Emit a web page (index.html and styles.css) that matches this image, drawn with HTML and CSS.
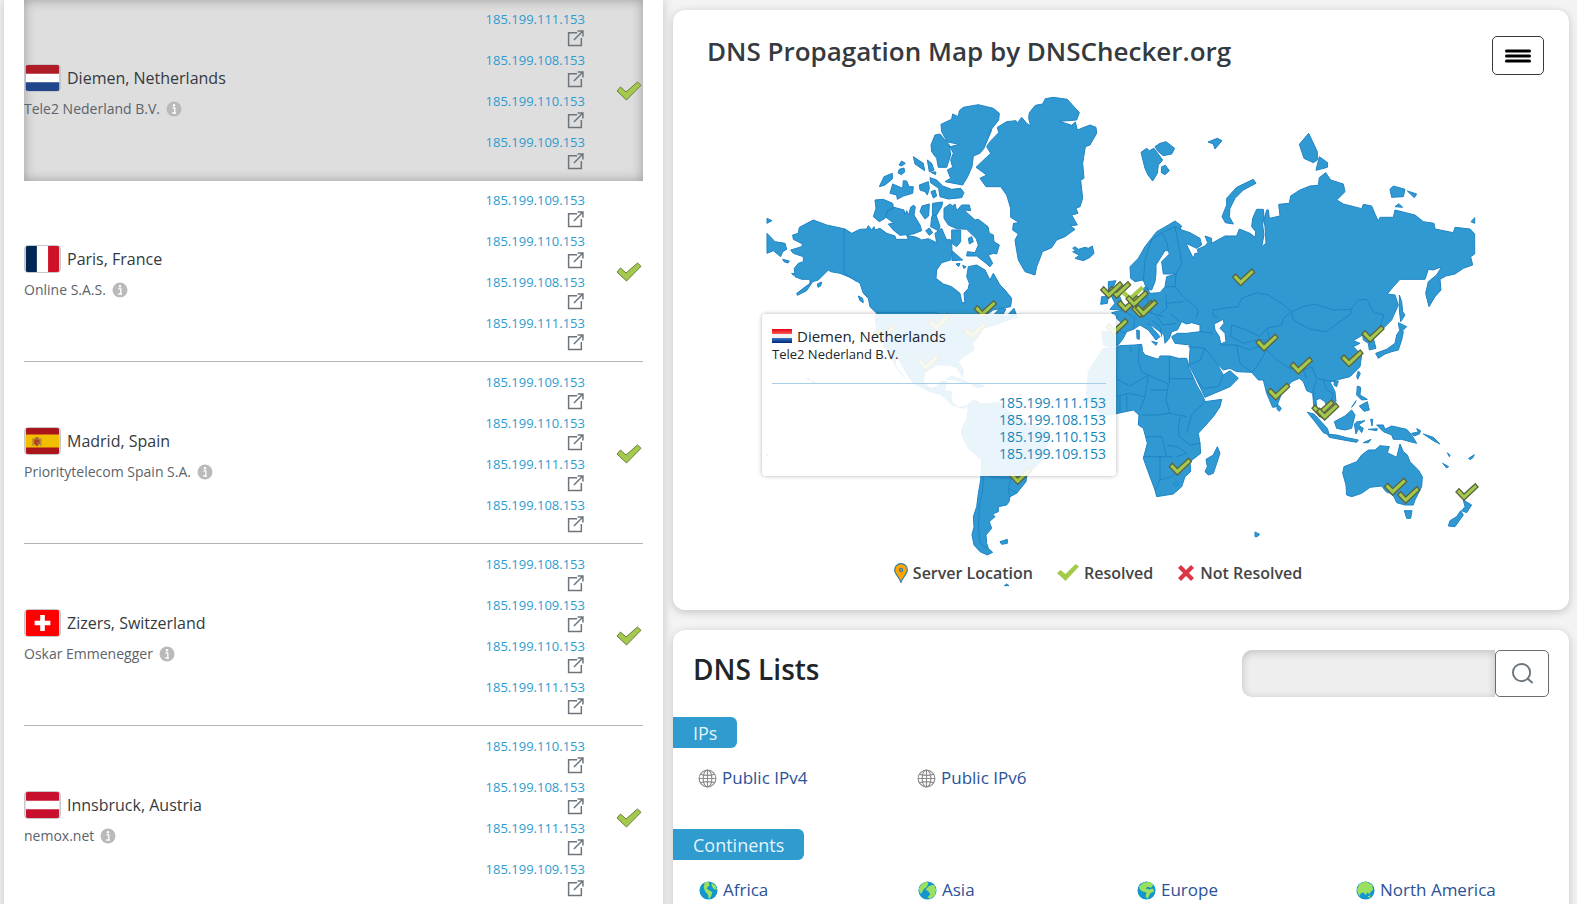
FILE: index.html
```html
<!DOCTYPE html>
<html lang="en">
<head>
<meta charset="utf-8">
<title>DNS Propagation Checker</title>
<link rel="stylesheet" href="styles.css">
</head>
<body>
<svg class="defs" aria-hidden="true">
  <symbol id="ext" viewBox="0 0 16 16"><path d="M9.500 2.500H1.500v12h12V7.500M6.500 9.500 14.500 1.500M10 1h5v5" fill="none" stroke="#6c757d" stroke-width="1.400"/></symbol>
  <symbol id="info" viewBox="0 0 16 16"><circle cx="8" cy="8" r="7.500" fill="#bababa"/><circle cx="8" cy="4.300" r="1.200" fill="#fff"/><path d="M6.300 6.800h2.500v4.800M6.200 12h3.800" fill="none" stroke="#fff" stroke-width="1.300"/></symbol>
  <symbol id="tick" viewBox="0 0 26 20"><path d="m1 10 3.500-4L10 11 21.500 1 25 4.300 10.500 19z" fill="#a4ca4c" stroke="#6d7a45" stroke-width="1" stroke-linejoin="round"/></symbol>
  <symbol id="tick-flat" viewBox="0 0 22 18"><path d="m0 9 3.500-3L8.500 10 18.500 0 22 2.500 8.500 17z" fill="#a4ca4c"/></symbol>
  <symbol id="globe" viewBox="0 0 20 20"><g fill="none" stroke="#8b8b8b" stroke-width="1.200"><circle cx="10" cy="10" r="8.800"/><ellipse cx="10" cy="10" rx="4.600" ry="8.800"/><path d="M10 1v18M1 10h18M2.500 5.500Q10 8 17.500 5.500M2.500 14.500Q10 12 17.500 14.500"/></g></symbol>
  <path id="pin" d="M0 0-24-25-15-35 0-19 34-50 42-40z"/>
</svg>
<div class="page">
  <main class="servers">
    <section class="row active">
      <div class="place">
        <div class="city"><svg class="flag" viewBox="0 0 36 28"><path fill="#ae1c28" d="M0 0h36v28H0z"/><path fill="#fff" d="M0 9.300h36v18.700H0z"/><path fill="#21468b" d="M0 18.700h36V28H0z"/></svg>Diemen, Netherlands</div>
        <div class="isp">Tele2 Nederland B.V. <svg class="info"><use href="#info"/></svg></div>
      </div>
      <ul class="ips">
        <li><a href="#">185.199.111.153</a><svg><use href="#ext"/></svg></li>
        <li><a href="#">185.199.108.153</a><svg><use href="#ext"/></svg></li>
        <li><a href="#">185.199.110.153</a><svg><use href="#ext"/></svg></li>
        <li><a href="#">185.199.109.153</a><svg><use href="#ext"/></svg></li>
      </ul>
      <svg class="tick"><use href="#tick"/></svg>
    </section>
    <section class="row">
      <div class="place">
        <div class="city"><svg class="flag" viewBox="0 0 36 28"><path fill="#002654" d="M0 0h12v28H0z"/><path fill="#fff" d="M12 0h12v28H12z"/><path fill="#ce1126" d="M24 0h12v28H24z"/></svg>Paris, France</div>
        <div class="isp">Online S.A.S. <svg class="info"><use href="#info"/></svg></div>
      </div>
      <ul class="ips">
        <li><a href="#">185.199.109.153</a><svg><use href="#ext"/></svg></li>
        <li><a href="#">185.199.110.153</a><svg><use href="#ext"/></svg></li>
        <li><a href="#">185.199.108.153</a><svg><use href="#ext"/></svg></li>
        <li><a href="#">185.199.111.153</a><svg><use href="#ext"/></svg></li>
      </ul>
      <svg class="tick"><use href="#tick"/></svg>
    </section>
    <section class="row">
      <div class="place">
        <div class="city"><svg class="flag" viewBox="0 0 36 28"><path fill="#aa151b" d="M0 0h36v28H0z"/><path fill="#f1bf00" d="M0 7h36v14H0z"/><path d="M7 11h2v8H7zM15 11h2v8h-2z" fill="#b98a3a"/><path d="M9 12h6v5l-3 3-3-3z" fill="#ad3f1d"/><path d="M10 10h4v2h-4zM12 15h2v3h-2z" fill="#9a6b50"/></svg>Madrid, Spain</div>
        <div class="isp">Prioritytelecom Spain S.A. <svg class="info"><use href="#info"/></svg></div>
      </div>
      <ul class="ips">
        <li><a href="#">185.199.109.153</a><svg><use href="#ext"/></svg></li>
        <li><a href="#">185.199.110.153</a><svg><use href="#ext"/></svg></li>
        <li><a href="#">185.199.111.153</a><svg><use href="#ext"/></svg></li>
        <li><a href="#">185.199.108.153</a><svg><use href="#ext"/></svg></li>
      </ul>
      <svg class="tick"><use href="#tick"/></svg>
    </section>
    <section class="row">
      <div class="place">
        <div class="city"><svg class="flag" viewBox="0 0 36 28"><path fill="#f00" d="M0 0h36v28H0z"/><path fill="#fff" d="M15.500 5.500h5v6H26.500v5H20.500v6h-5v-6H9.500v-5h6z"/></svg>Zizers, Switzerland</div>
        <div class="isp">Oskar Emmenegger <svg class="info"><use href="#info"/></svg></div>
      </div>
      <ul class="ips">
        <li><a href="#">185.199.108.153</a><svg><use href="#ext"/></svg></li>
        <li><a href="#">185.199.109.153</a><svg><use href="#ext"/></svg></li>
        <li><a href="#">185.199.110.153</a><svg><use href="#ext"/></svg></li>
        <li><a href="#">185.199.111.153</a><svg><use href="#ext"/></svg></li>
      </ul>
      <svg class="tick"><use href="#tick"/></svg>
    </section>
    <section class="row">
      <div class="place">
        <div class="city"><svg class="flag" viewBox="0 0 36 28"><path fill="#c8102e" d="M0 0h36v28H0z"/><path fill="#fff" d="M0 9.300h36v9.400H0z"/></svg>Innsbruck, Austria</div>
        <div class="isp">nemox.net <svg class="info"><use href="#info"/></svg></div>
      </div>
      <ul class="ips">
        <li><a href="#">185.199.110.153</a><svg><use href="#ext"/></svg></li>
        <li><a href="#">185.199.108.153</a><svg><use href="#ext"/></svg></li>
        <li><a href="#">185.199.111.153</a><svg><use href="#ext"/></svg></li>
        <li><a href="#">185.199.109.153</a><svg><use href="#ext"/></svg></li>
      </ul>
      <svg class="tick"><use href="#tick"/></svg>
    </section>
  </main>

  <div class="side">
    <section class="card map-card">
      <header class="map-head">
        <h2>DNS Propagation Map by DNSChecker.org</h2>
        <button class="menu" aria-label="Menu"><svg viewBox="0 0 26 14"><path d="M1.500 2h23M1.500 7h23M1.500 12h23" stroke="#000" stroke-width="3" stroke-linecap="round"/></svg></button>
      </header>
      <div class="map">
        <svg class="world" viewBox="761 90 720 470" role="img" aria-label="World map of DNS servers">
          <g class="land" transform="translate(760 80) scale(.33333)">
            <path d="M648,262 692,220 680,200 690,185 716,158 712,142 740,125 768,122 772,130 785,112 800,130 812,138 806,115 808,98 826,76 848,72 856,56 880,52 922,58 958,98 950,120 898,124 935,136 946,126 952,150 990,135 1008,142 1010,160 990,195 976,200 968,250 972,295 962,300 968,355 960,380 948,385 954,400 935,405 952,435 930,437 945,448 915,470 890,480 875,503 847,515 840,535 830,560 825,585 795,575 775,540 768,500 765,480 775,462 758,450 760,430 778,428 752,412 752,385 740,345 722,320 678,320 660,295 680,285Z"/>
            <path d="M595,110 598,92 610,82 655,74 700,85 718,100 716,120 685,160 695,150 672,205 660,220 640,228 636,260 622,292 608,315 555,305 572,295 562,270 578,262 572,240 580,220 570,200 598,193 562,186 545,155 543,133 575,118 578,102Z"/>
            <path d="M540,162 555,180 568,195 572,225 560,262 535,262 530,235 515,215 513,195 525,165ZM460,230 490,250 494,272 465,252ZM502,240 515,250 522,270 508,275ZM512,276 528,276 526,284ZM425,243 436,250 425,258 417,255ZM418,268 432,264 434,276 424,284 414,278ZM358,320 372,290 397,280 397,297 375,315ZM398,312 428,325 430,302 440,303 447,320 460,320 458,340 430,348 412,358 410,345 390,340ZM478,315 505,305 508,325 502,345 495,335 480,330ZM513,335 525,330 530,348 520,354ZM510,293 530,300 548,318 575,328 602,325 612,338 605,353 565,357 540,350 536,325 512,308Z"/>
            <path d="M345,360 370,358 398,370 400,382 380,395 375,415 358,425 340,410 348,385ZM382,395 402,382 432,390 435,405 440,392 446,405 452,382 460,376 466,380 462,405 480,435 485,452 460,462 420,466 400,450 385,432 402,430 378,412ZM486,378 508,372 506,408 495,417 480,395ZM518,370 548,366 545,380 530,405 517,408ZM515,410 528,405 540,440 535,452 512,440Z"/>
            <path d="M552,385 570,372 578,378 585,372 590,392 605,375 628,375 632,392 612,390 645,420 655,418 684,440 688,460 700,465 702,485 718,495 710,522 700,520 685,525 698,550 690,560 672,545 650,528 620,528 622,515 645,518 655,495 648,475 620,448 590,446 565,435 552,415ZM625,475 635,470 640,485 628,492ZM575,450 602,450 602,485 590,500 575,490ZM576,512 608,540 576,542ZM497,452 508,444 518,458 508,466ZM588,552 600,550 596,560ZM608,556 618,560 612,566Z"/>
            <path d="M118,442 160,420 200,435 255,447 275,460 300,448 320,447 325,437 335,450 342,440 345,450 360,445 380,460 405,468 408,478 445,478 440,466 470,472 485,480 505,476 530,488 525,460 545,445 560,480 570,478 576,500 575,520 572,540 545,548 530,570 528,595 550,612 575,620 600,640 605,665 615,670 612,640 625,625 628,610 620,590 625,560 650,555 675,570 690,600 700,580 720,615 735,630 755,655 752,680 700,690 672,710 700,705 720,685 738,687 725,710 740,708 762,685 772,712 740,722 705,735 670,745 650,778 638,790 642,810 610,830 595,845 610,870 608,892 592,865 570,855 530,855 515,865 495,875 490,905 510,925 530,922 540,905 562,905 552,932 575,935 575,965 595,982 620,978 610,985 575,975 545,945 510,935 460,910 440,880 410,830 405,855 435,895 415,870 390,825 360,780 350,750 345,710 350,700 330,680 325,655 310,640 300,610 285,600 265,590 240,580 212,575 205,570 185,590 175,600 158,605 140,632 112,646 110,640 150,610 150,598 125,598 105,590 103,565 115,550 130,545 130,530 100,520 92,510 125,500 128,492 100,478 98,465 115,460Z"/>
            <path d="M21,460 45,485 75,490 80,508 68,515 62,530 40,512 21,520ZM21,415 36,422 21,430ZM68,538 88,543 84,549 72,545ZM295,648 308,655 310,668 300,662ZM172,612 185,606 182,618 174,622ZM95,580 106,582 100,586Z"/>
            <path d="M938,515 948,514 938,505 945,500 955,508 975,502 985,505 997,498 1002,520 990,532 970,542 945,535 958,526Z"/>
            <path class="border" d="M252,447V578L290,605M350,697H525L560,712M380,395 402,382"/>
          </g>
          <g class="land" transform="translate(750 300) scale(.33333)">
            <path d="M650,318 670,300 685,305 690,312 750,308 765,325 800,350 835,368 865,380 890,388 900,410 885,450 878,480 850,505 830,530 828,545 800,580 780,590 777,605 770,615 745,620 745,635 728,642 735,650 718,665 725,685 708,705 710,730 715,745 728,757 712,765 690,755 672,735 666,705 672,680 670,650 680,620 685,580 692,540 695,480 655,445 635,405 635,385 650,360 655,330Z"/>
            <path d="M588,238 605,228 640,240 660,250 640,250 615,240ZM665,255 680,250 705,260 680,263ZM170,235 180,237 175,240ZM185,242 200,250 193,253ZM750,725 772,718 772,730 755,733ZM763,857 770,852 777,857ZM50,464h4v3h-4z"/>
            <path class="border" d="M700,530 698,570 688,620 685,680 690,730 712,745M783,535 775,565 800,578M780,590 775,565M700,330 715,360 760,350M655,380 690,390 710,430 760,450 790,500M695,480 720,530 783,535"/>
          </g>
          <g class="land" transform="translate(1090 300) scale(.33333)">
            <path d="M40,145 70,145 90,137 135,135 155,133 158,155 165,165 205,178 210,168 240,168 265,175 290,175 298,205 320,255 340,290 345,305 395,298 390,320 370,350 325,400 330,430 332,460 300,485 302,515 285,530 275,560 250,582 200,590 195,570 178,525 160,475 172,430 160,385 145,375 147,345 130,330 60,345 30,343 -5,305 -10,280 -5,215 20,175Z"/>
            <path d="M348,478 370,465 382,440 390,460 370,520 355,525 345,515 352,500ZM562,312 574,325 568,334 561,328ZM733,243 745,243 740,260 732,255ZM805,213 811,220 803,238 800,228ZM802,258 812,262 810,285 832,298 815,300 800,285ZM808,318 832,305 838,330 822,334ZM798,302 785,322 796,308Z"/>
            <path d="M652,337 672,342 712,385 718,405 700,398 675,365ZM712,403 740,405 770,413 805,420 800,427 760,420 718,412ZM820,428 843,418 835,428ZM733,365 765,348 785,330 795,345 785,385 765,390 740,385ZM793,372 800,366 825,362 805,375 820,385 815,398 806,385 798,402ZM842,358 848,358 846,378ZM835,388 862,386 860,392ZM860,375 880,375 885,388 905,378 950,388 965,405 980,430 960,425 935,418 910,418 905,405 880,395ZM965,400 985,396 980,386 992,392 988,402 972,408ZM1000,402 1030,412 1050,432 1030,422ZM1072,458 1080,466 1078,470ZM1058,490 1076,500 1070,504ZM1136,475 1153,464 1148,474 1140,479Z"/>
            <path d="M762,500 800,485 815,465 835,450 855,450 870,437 898,440 892,458 920,472 930,432 940,455 952,465 960,485 985,510 997,530 995,560 975,600 970,615 945,615 920,608 912,590 900,580 888,575 875,558 840,562 815,580 785,590 770,585 768,555 758,520ZM943,632 966,632 962,655 950,655ZM1120,600 1145,615 1130,638 1115,632 1125,620ZM1112,632 1120,645 1095,680 1075,678 1080,662 1100,650ZM495,696 509,703 502,710 495,710Z"/>
            <path d="M940,95 935,120 925,150 905,155 885,162 865,175 857,160 890,148 915,130 920,105 930,90ZM928,88 925,68 950,80 938,92Z"/>
            <path class="border" d="M80,237 120,258 175,225M148,137 145,185 155,215 175,225 235,252M238,170V250M238,236H312M175,225 165,290 150,330M235,252 228,300 240,340 290,350M155,345H200L240,340M165,410H215L220,430 230,470M160,470H250M210,470V540L245,530 290,485M270,350 265,380 268,410 300,435 332,430M345,305 305,345 290,400M80,290 115,280 165,290M180,270H230M195,572 210,540M250,552 258,543 266,552 258,560ZM230,435 262,440 290,460 260,470M90,290V335M110,285V330M75,143 78,235M120,140 125,155"/>
          </g>
          <g class="land" transform="translate(1080 110) scale(.33333)">
            <path d="M150,470 175,445 195,410 230,365 265,345 285,333 305,348 300,358 330,368 360,385 365,405 350,415 318,400 325,415 335,435 340,445 345,430 355,430 352,418 375,408 383,398 375,378 395,385 395,400 435,378 470,378 478,357 510,370 526,382 527,365 515,350 518,325 530,298 550,298 552,320 548,345 552,375 545,410 558,400 555,350 552,330 560,300 565,300 568,325 600,318 596,283 628,280 632,258 660,240 690,228 715,226 718,203 737,188 752,210 790,222 795,245 770,270 790,282 845,296 850,283 875,288 885,312 895,333 900,322 940,322 945,300 1005,315 1030,335 1062,340 1065,357 1120,368 1125,352 1170,357 1184,372 1184,432 1172,440 1178,465 1150,475 1125,492 1098,498 1080,508 1083,540 1065,560 1047,590 1037,550 1045,515 1070,495 1085,470 1060,480 1045,478 1035,508 960,508 940,530 922,552 945,555 955,585 935,630 910,655 880,685 888,715 868,720 865,700 850,690 848,675 820,692 840,700 820,710 845,735 840,770 810,800 770,810 750,815 765,845 768,875 742,895 735,875 720,865 708,870 710,890 725,920 735,930 720,920 702,895 698,850 680,842 670,815 658,805 635,815 605,850 590,890 578,892 560,850 550,810 535,810 515,787 470,785 450,775 430,780 410,760 430,795 450,782 475,805 450,830 375,862 350,810 327,765 330,720 330,705 285,700 275,680 292,670 320,670 360,665 360,645 335,638 320,642 305,635 292,660 275,665 268,685 255,700 252,675 220,650 205,640 240,680 228,690 205,660 180,645 160,658 140,665 130,685 115,705 90,712 70,705 65,665 120,665 125,640 105,620 95,608 130,600 160,585 175,560 195,555 190,535 200,530 210,550 240,548 255,530 260,500 290,492 250,492 245,455 268,432 265,422 255,422 228,465 228,490 225,515 215,540 200,538 190,510 165,515 152,505Z"/>
            <path d="M183,127 200,115 208,122 222,115 248,150 235,165 232,190 218,213 204,195 195,175ZM225,110 240,100 258,95 284,115 275,132 250,137 235,125ZM245,170 256,166 268,182 255,194 244,188ZM384,96 412,85 426,92 405,117 400,102ZM426,320 440,285 440,265 470,232 520,208 528,220 490,240 465,265 450,295 448,320 460,342 436,338ZM686,70 712,125 712,150 700,158 672,145 658,103ZM718,140 743,158 742,172 708,181ZM930,238 940,228 975,238 970,260 935,262ZM982,243 1010,252 1003,263ZM945,290 957,281 968,292ZM1173,335 1184,323 1184,340Z"/>
            <path d="M85,515 108,512 100,530 115,550 130,585 125,600 90,598 105,580 95,560 85,540ZM65,560 85,560 82,580 62,583ZM958,555 965,575 968,605 975,615 962,635 958,600ZM170,660 178,662 178,688 171,686ZM215,694 232,698 228,706Z"/>
            <path class="border" d="M190,515 195,450 215,390 245,368 262,400 265,420M245,368 285,350 292,385 300,425 305,460 288,492M285,350 300,358M288,492 285,530 310,560 355,600 350,625M255,530H285M258,555 260,595M310,575 260,580M200,560 215,610 250,620M180,600 215,610M400,600 430,595 475,590 485,565 530,548 565,555 605,580 635,605 610,625 605,645 560,655 540,680 500,660 455,645 452,680M400,600 398,615 415,625M635,605 670,590 705,582 760,600 812,598 815,610 780,635 740,665 690,658 640,630ZM812,598 835,570 860,568 880,605 912,615 900,650M260,595 230,620 250,645 290,640M215,630 240,650 245,680M130,600 165,625 160,658M270,610 300,635M120,665 135,668M420,705 470,705 510,720 530,710M470,705 480,760 515,787M560,655 570,690 530,710 560,720 530,770 515,787M560,720 590,750 630,775 670,780 680,805M670,780 695,770 710,805 730,810 765,815M710,810 700,840 702,870M730,810 740,840 760,850 755,870M325,710 375,715 410,760M350,810 370,835 415,830 430,795M360,665 400,670M375,715 360,750 327,765M452,680 490,700 530,690 575,690"/>
            <path class="sea" d="M402,642 430,628 432,640 420,655 435,670 438,695 422,702 418,680 405,660Z"/>
          </g>
          <g class="pins" transform="translate(1080 110) scale(.33333)">
            <use href="#pin" x="482" y="527"/><use href="#pin" x="110" y="565"/><use href="#pin" x="86" y="565"/><use class="plain" href="#pin" x="150" y="577"/><use href="#pin" x="136" y="607"/><use href="#pin" x="162" y="592"/><use href="#pin" x="180" y="622"/><use href="#pin" x="190" y="620"/><use href="#pin" x="870" y="697"/>
            <use href="#pin" x="552" y="723"/><use href="#pin" x="655" y="792"/><use href="#pin" x="807" y="770"/><use href="#pin" x="587" y="870"/><use href="#pin" x="720" y="920"/><use href="#pin" x="734" y="930"/><use href="#pin" x="292" y="1095"/><use href="#pin" x="938" y="1155"/><use href="#pin" x="977" y="1180"/><use href="#pin" x="1152" y="1171"/><use href="#pin" x="102" y="676"/>
          </g>
          <g class="pins" transform="translate(750 300) scale(.33333)">
            <use href="#pin" x="697" y="52"/><use href="#pin" x="558" y="92"/><use href="#pin" x="527" y="212"/><use href="#pin" x="665" y="118"/><use href="#pin" x="803" y="553"/><use href="#pin" x="395" y="124"/>
          </g>
        </svg>
        <aside class="tip">
          <div class="tip-city"><svg viewBox="0 0 20 14"><defs><linearGradient id="r" x2="0" y2="1"><stop stop-color="#e1000f"/><stop offset="1" stop-color="#ff5a5a"/></linearGradient><linearGradient id="b" x2="0" y2="1"><stop stop-color="#3b78c4"/><stop offset="1" stop-color="#00247d"/></linearGradient></defs><path fill="#f4f4f4" d="M0 0h20v14H0z"/><path fill="url(#r)" d="M0 0h20v5H0z"/><path fill="url(#b)" d="M0 9h20v5H0z"/></svg>Diemen, Netherlands</div>
          <div class="tip-isp">Tele2 Nederland B.V.</div>
          <hr>
          <div class="tip-ips">185.199.111.153<br>185.199.108.153<br>185.199.110.153<br>185.199.109.153</div>
        </aside>
      </div>
      <div class="legend">
        <span><svg class="loc" viewBox="0 0 14 20"><path d="M7 19.300C5.500 14.500.7 11 .7 6.900a6.300 6.300 0 0 1 12.600 0C13.300 11 8.500 14.500 7 19.300z" fill="#ffa500" stroke="#2f7fa8" stroke-width="1.200"/><circle cx="7" cy="7" r="1.600" fill="#c9a24a" stroke="#2f7fa8" stroke-width="1.200"/></svg>Server Location</span>
        <span><svg class="ok"><use href="#tick-flat"/></svg>Resolved</span>
        <span><svg class="no" viewBox="0 0 18 18"><path d="M2.500 2.500l13 13M15.500 2.500l-13 13" stroke="#dc3545" stroke-width="4.200"/></svg>Not Resolved</span>
      </div>
    </section>

    <section class="card lists">
      <header class="lists-head">
        <h2>DNS Lists</h2>
        <form class="search">
          <input type="search" aria-label="Search DNS lists">
          <button type="button" aria-label="Search"><svg viewBox="0 0 24 24" fill="none" stroke="#6c757d" stroke-width="2"><circle cx="11" cy="11" r="9"/><path d="M17 17l5.500 5"/></svg></button>
        </form>
      </header>
      <h3>IPs</h3>
      <nav class="links">
        <a href="#"><svg><use href="#globe"/></svg>Public IPv4</a>
        <a href="#"><svg><use href="#globe"/></svg>Public IPv6</a>
      </nav>
      <h3>Continents</h3>
      <nav class="links continents">
        <a href="#"><svg viewBox="0 0 20 20"><circle cx="10" cy="10" r="9.500" fill="#1296cb"/><path d="M6 1.500 10 .5l1 4-3 3 2 2 4 2-1 4-2.500 4-1-5-3-3.500L5 7zM13 2l4 2.500 2 5-3.500-1-2-3z" fill="#9be05f"/></svg>Africa</a>
        <a href="#"><svg viewBox="0 0 20 20"><circle cx="10" cy="10" r="9.500" fill="#1296cb"/><path d="M1 8 4 3l5-2.500 2 2-2 4-3 2-2 4-2 1zM12 5l5-1 2 5-1 6-5 4-3-2 3-3-2-3-3-2z" fill="#9be05f"/></svg>Asia</a>
        <a href="#"><svg viewBox="0 0 20 20"><circle cx="10" cy="10" r="9.500" fill="#1296cb"/><path d="M2 6 7 1.500 14 1l3 3-2 3-4-1-2 2 4 1 4-1 1 3-4 2-3 6-2-3 1-4-4-1-3-2z" fill="#9be05f"/></svg>Europe</a>
        <a href="#"><svg viewBox="0 0 20 20"><circle cx="10" cy="10" r="9.500" fill="#1296cb"/><path d="M1 9 4 3l6-2.500 7 3.500 1 5-3 3-1 2-2-2-2 3-2-3-3 1-1 3-2-3zM12 16l4-1-2 3z" fill="#9be05f"/></svg>North America</a>
      </nav>
    </section>
  </div>
</div>
</body>
</html>
```
FILE: styles.css
```css
* { box-sizing: border-box; }
body {
  margin: 0;
  height: 100vh;
  overflow: hidden;
  background: #f3f3f3;
  color: #343a40;
  font-family: "Open Sans", "Noto Sans", sans-serif;
}
a { text-decoration: none; }
h2, h3, ul { margin: 0; padding: 0; font-weight: 400; }
svg { display: block; flex: none; }
.defs { position: absolute; width: 0; height: 0; }

.page {
  display: grid;
  grid-template-columns: minmax(0, 659fr) minmax(0, 896fr);
  gap: 10px;
  padding: 0 8px 0 4px;
}

.servers {
  min-height: 100vh;
  padding: 0 20px;
  background: #fff;
  box-shadow: 0 0 10px rgba(0, 0, 0, .2);
}
.row {
  display: flex;
  align-items: center;
  padding: 8px 0;
  border-bottom: 1px solid #b5b5b5;
}
.row.active {
  padding-bottom: 9px;
  background: #dedede;
  border-bottom: 0;
  box-shadow: inset 0 0 12px rgba(0, 0, 0, .3);
}
.row + .row { padding-top: 9px; }
.row.active + .row { padding-top: 8px; }
.place { flex: 1; padding-top: 6px; }
.city {
  display: flex;
  align-items: center;
  gap: 6px;
  font-size: 16px;
  line-height: 28px;
}
.flag {
  width: 37px;
  height: 28px;
  border: 1px solid #c4c8cc;
  border-radius: 4px;
}
.isp {
  display: flex;
  align-items: center;
  gap: 6px;
  margin-top: 3px;
  color: #5c636a;
  font-size: 14px;
  line-height: 28px;
}
.info { width: 16px; height: 16px; }
.ips { list-style: none; font-size: 13px; line-height: 22px; }
.ips li { display: flex; flex-direction: column; align-items: flex-end; }
.ips a { color: #2f9bce; }
.ips svg { width: 17px; height: 17px; margin: 0 1px 2px 0; }
.tick { width: 26px; height: 20px; margin: 2px 1px 0 31px; }

.side { display: flex; flex-direction: column; gap: 20px; padding-top: 10px; }
.card {
  background: #fff;
  border-radius: 12px;
  box-shadow: 0 2px 8px rgba(0, 0, 0, .2);
}
.map-head {
  display: flex;
  justify-content: space-between;
  padding: 26px 25px 15px 34px;
}
.map-head h2 { font-size: 26px; font-weight: 600; line-height: 30px; }
.menu {
  display: grid;
  place-items: center;
  width: 52px;
  height: 39px;
  padding: 0;
  background: #fff;
  border: 1px solid #343a40;
  border-radius: 5px;
}
.menu svg { width: 26px; height: 14px; }
.map { position: relative; max-width: 720px; margin: 0 auto; }
.world { width: 100%; height: auto; overflow: visible; }
.land path { fill: #3099d1; stroke: #1f84c6; stroke-width: 3; stroke-linejoin: round; }
.land .border { fill: none; }
.land .sea { fill: #fff; }
.pins use { fill: #a4ca4c; stroke: #5c6340; stroke-width: 4; }
.pins .plain { stroke: none; }
.tip {
  position: absolute;
  top: 224px;
  left: 1px;
  width: 354px;
  padding: 12px 10px;
  background: rgba(255, 255, 255, .9);
  border-radius: 4px;
  box-shadow: 0 0 4px rgba(0, 0, 0, .3);
  color: #212529;
}
.tip-city { display: flex; align-items: center; gap: 5px; font-size: 15px; line-height: 20px; }
.tip-city svg { width: 20px; height: 14px; }
.tip-isp { font-size: 13px; line-height: 17px; }
.tip hr { margin: 20px 0 10px; border: 0; border-top: 1px solid #a9cfe6; }
.tip-ips { color: #1686b8; font-size: 14px; line-height: 17px; text-align: right; padding: 0 0 2px; }
.legend {
  display: flex;
  justify-content: center;
  gap: 24px;
  padding: 0 46px 24px 0;
  color: #444;
  font-size: 16px;
  font-weight: 600;
  line-height: 26px;
}
.legend span { display: flex; align-items: center; gap: 5px; }
.loc { width: 14px; height: 20px; }
.ok { width: 22px; height: 18px; }
.no { width: 18px; height: 18px; }

.lists { min-height: 300px; }
.lists-head {
  display: flex;
  justify-content: space-between;
  padding: 20px 20px 20px 20px;
}
.lists-head h2 { color: #212529; font-size: 28px; font-weight: 600; line-height: 38px; }
.search { display: flex; width: 307px; height: 47px; }
.search input {
  flex: 1;
  min-width: 0;
  border: 0;
  border-radius: 10px 0 0 10px;
  background: #eee;
  box-shadow: inset 0 2px 8px rgba(0, 0, 0, .2);
}
.search button {
  display: grid;
  place-items: center;
  width: 54px;
  padding: 0;
  background: #fff;
  border: 1px solid #6c6c6c;
  border-radius: 5px;
}
.search svg { width: 23px; height: 23px; }
h3 {
  width: fit-content;
  padding: 2px 20px 0;
  background: #2f9bce;
  border-radius: 0 6px 6px 0;
  color: #e3f4fc;
  font-size: 18px;
  line-height: 29px;
}
.links {
  display: grid;
  grid-template-columns: repeat(4, 219px);
  padding: 14px 0 35px 25px;
}
.links a {
  display: flex;
  align-items: center;
  gap: 5px;
  color: #2a5298;
  font-size: 17px;
  line-height: 32px;
}
.links svg { width: 19px; height: 19px; }
.continents { padding-left: 26px; }
```
